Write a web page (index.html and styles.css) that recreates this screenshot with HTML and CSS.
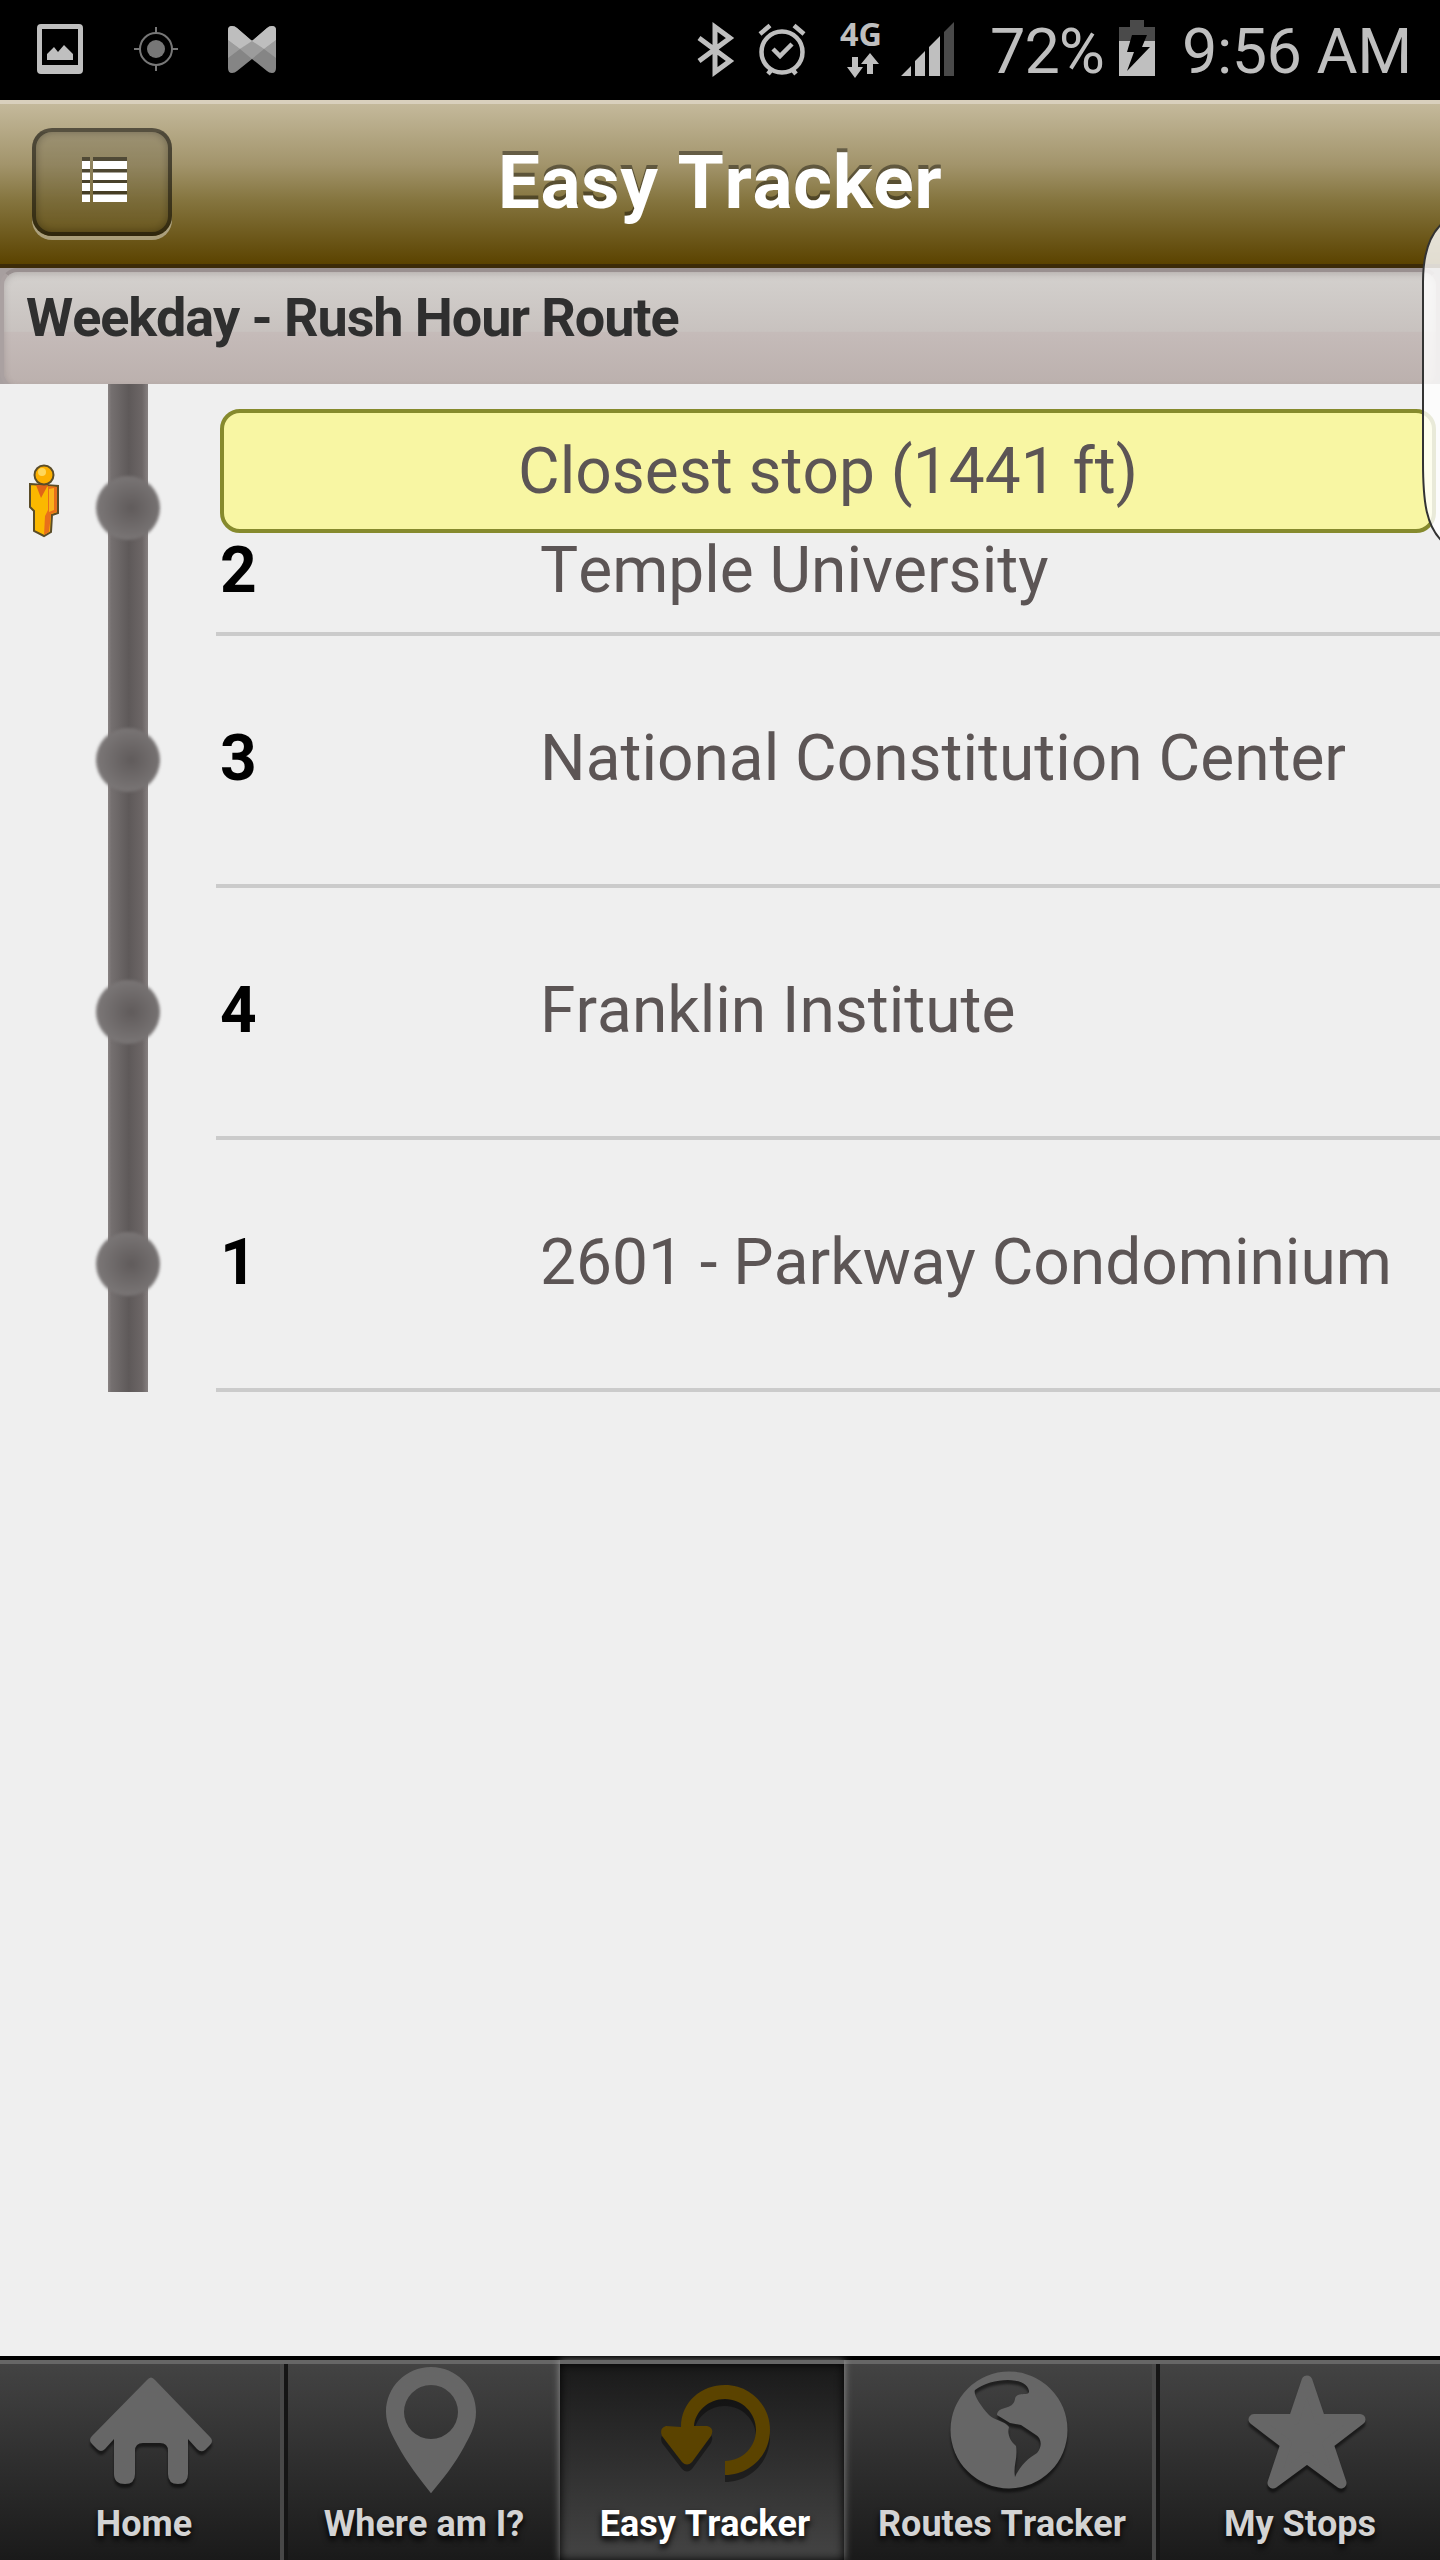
FILE: index.html
```
<!DOCTYPE html>
<html lang="en">
<head>
    <meta charset="UTF-8">
    <meta name="viewport" content="width=device-width, initial-scale=1.0">
    <title>Easy Tracker</title>
    <link rel="stylesheet" href="styles.css">
</head>
<body>
    <div class="screen">
        <div class="status-bar">
            <div class="status-left">
                <svg class="st-photo" width="46" height="50" viewBox="0 0 46 50">
                    <path fill="#bfbfbf" fill-rule="evenodd" d="M4 0H42Q46 0 46 4V46Q46 50 42 50H4Q0 50 0 46V4Q0 0 4 0ZM5 5V41H41V5Z"/>
                    <path fill="#bfbfbf" d="M10 36V30L17 23L21 28L27 21L36 30V36Z"/>
                </svg>
                <svg class="st-gps" width="46" height="46" viewBox="0 0 46 46">
                    <circle cx="23" cy="23" r="16" fill="none" stroke="#777" stroke-width="2"/>
                    <circle cx="23" cy="23" r="9" fill="#777"/>
                    <path d="M23 1V7M23 39V45M1 23H7M39 23H45" stroke="#777" stroke-width="2"/>
                </svg>
                <svg class="st-mail" width="48" height="47" viewBox="0 0 48 47">
                    <path fill="#858585" d="M0 4Q0 0 4 0Q7 0 9 2L24 15L39 2Q41 0 44 0Q48 0 48 4V42Q48 47 44 47Q41 47 39 45L24 33L9 45Q7 47 4 47Q0 47 0 42Z"/>
                    <path fill="#9c9c9c" d="M0 14L12 23L24 14L36 23L48 14V32L36 23L24 33L12 23L0 32Z"/>
                    <path fill="#bebebe" d="M0 4Q0 0 4 0Q7 0 9 2L24 15L12 23L0 14ZM48 4Q48 0 44 0Q41 0 39 2L24 15L36 23L48 14Z"/>
                </svg>
            </div>
            <div class="status-right">
                <svg class="st-icons" width="260" height="90" viewBox="0 -15 260 90">
                    <path fill="none" stroke="#bfbfbf" stroke-width="5" d="M2 18L33 41L18 52V7L33 18L2 41"/>
                    <circle cx="85" cy="32" r="20.500" fill="none" stroke="#bfbfbf" stroke-width="4.500"/>
                    <path fill="none" stroke="#bfbfbf" stroke-width="4.500" d="M76 29L83 36L95 24M63 14L73 5.500M107 14L97 5.500M75 49L71 54M95 49L99 54"/>
                    <text class="net" x="143" y="26" textLength="42" lengthAdjust="spacingAndGlyphs">4G</text>
                    <path fill="#bfbfbf" d="M155 37H161V47H166L158 58L150 47H155ZM170 54H176V44H182L173 33L164 44H170Z"/>
                    <path fill="#bfbfbf" d="M204 56L214 46V56ZM218 41L228 31V56H218ZM232 27L243 16V56H232Z"/>
                    <path fill="#4a4a4a" d="M247 12L257 2V56H247Z"/>
                </svg>
                <span class="battery-pct">72%</span>
                <svg class="st-battery" width="36" height="56" viewBox="0 0 36 56">
                    <path fill="#4a4a4a" d="M11 0H25V7H36V21H0V7H11Z"/>
                    <path fill="#bfbfbf" d="M0 21H36V56H0Z"/>
                    <path fill="#000" d="M13 15H28L23 27H31L8 51L15 32H8Z"/>
                </svg>
                <span class="clock">9:56 AM</span>
            </div>
        </div>

        <div class="title-bar">
            <button class="menu-btn" aria-label="Menu">
                <svg width="46" height="50" viewBox="0 0 46 50">
                    <path fill="#000" fill-opacity=".45" d="M0 0H8V45H0ZM11 0H45V45H11Z"/>
                    <path fill="#fff" d="M0 4H8V12H0ZM11 4H45V12H11ZM0 15.500H8V23H0ZM11 15.500H45V23H11ZM0 26H8V34H0ZM11 26H45V34H11ZM0 37.500H8V45H0ZM11 37.500H45V45H11Z"/>
                </svg>
            </button>
            <h1>Easy Tracker</h1>
        </div>

        <div class="route-bar">
            <div class="route-field">Weekday - Rush Hour Route</div>
        </div>

        <div class="stops">
            <div class="stop">
                <div class="marker">
                    <svg width="34" height="74" viewBox="0 0 34 74">
                        <path fill="#fbb800" stroke="#5a4c28" stroke-width="2" d="M3 20L31 22V49L25 51L24 68L17 72L7 67V47L3 43Z"/>
                        <path fill="#e8701a" d="M21 22L30 23V48L24 50L22 68L17 71L18 52L21 46Z"/>
                        <path fill="#fbb21c" d="M22 25L27 24V46L22 48Z"/>
                        <path fill="#e06418" d="M9 21H21L14 34Z"/>
                        <circle cx="17" cy="11" r="9.500" fill="#fdb000" stroke="#5a4c28" stroke-width="2"/>
                        <circle cx="15" cy="8" r="4" fill="#ffd75a"/>
                    </svg>
                </div>
                <div class="track"><div class="dot"></div></div>
                <div class="stop-body">
                    <div class="closest">Closest stop (1441 ft)</div>
                    <div class="stop-line"><span class="num">2</span><span class="name">Temple University</span></div>
                </div>
            </div>
            <div class="stop">
                <div class="marker"></div>
                <div class="track"><div class="dot"></div></div>
                <div class="stop-body">
                    <div class="stop-line"><span class="num">3</span><span class="name">National Constitution Center</span></div>
                </div>
            </div>
            <div class="stop">
                <div class="marker"></div>
                <div class="track"><div class="dot"></div></div>
                <div class="stop-body">
                    <div class="stop-line"><span class="num">4</span><span class="name">Franklin Institute</span></div>
                </div>
            </div>
            <div class="stop">
                <div class="marker"></div>
                <div class="track"><div class="dot"></div></div>
                <div class="stop-body">
                    <div class="stop-line"><span class="num">1</span><span class="name">2601 - Parkway Condominium</span></div>
                </div>
            </div>
        </div>

        <div class="tab-bar">
            <div class="tab tab-home">
                <svg class="tab-icon" width="128" height="128" viewBox="0 0 128 128">
                    <path d="M60 14Q64 9 68 14L123 71Q127 75 123 79L118 84Q114 87 110 83L101 73V108Q101 118 91 118Q81 118 81 108V85Q81 77 73 77H56Q48 77 48 85V108Q48 118 38 118Q27 118 27 108V73L18 83Q14 87 10 83L5 78Q1 74 5 70Z"/>
                </svg>
                <span>Home</span>
            </div>
            <div class="tab tab-where">
                <svg class="tab-icon flat" width="128" height="128" viewBox="0 0 128 128">
                    <path fill-rule="evenodd" d="M64 1C89 1 109 21 109 46C109 61 102 71 97 81C88 98 75 114 65 126Q64 128 63 126C53 113 40 97 31 80C26 70 19 60 19 46C19 21 39 1 64 1ZM64 19A27 27 0 1 0 64 73A27 27 0 1 0 64 19Z"/>
                </svg>
                <span>Where am I?</span>
            </div>
            <div class="tab tab-easy active">
                <svg class="tab-icon" width="128" height="128" viewBox="0 0 128 128">
                    <path d="M30 61C30 36 50 19 74 19C99 19 119 39 119 64C119 89 99 109 74 109V95C91 95 105 81 105 64C105 47 91 33 74 33C57 33 44 46 43 60H56Q64 62 60 70L41 96Q36 101 31 96L11 70Q8 62 15 60Z"/>
                </svg>
                <span>Easy Tracker</span>
            </div>
            <div class="tab tab-routes">
                <svg class="tab-icon" width="128" height="128" viewBox="0 0 128 128">
                    <path fill-rule="evenodd" d="M64 5.500A58.500 58.500 0 1 1 64 122.500A58.500 58.500 0 1 1 64 5.500ZM30 24C28 28 35 39 44 49C49 54 60 55 64 61C62 68 65 75 71 80C73 93 68 99 70 111C76 98 84 92 92 87C98 80 96 72 91 69L76 59L65 57L52 49C53 39 68 45 70 33C71 25 85 31 84 25C82 10 47 11 30 24Z"/>
                </svg>
                <span>Routes Tracker</span>
            </div>
            <div class="tab tab-stops">
                <svg class="tab-icon" width="128" height="128" viewBox="0 0 128 128">
                    <path stroke-width="11" stroke-linejoin="round" d="M64 15L77 53.500H117L85 78L98 117L64 92L30 117L43 78L11 53.500H51Z"/>
                </svg>
                <span>My Stops</span>
            </div>
        </div>

        <!-- edge panel handle, partly off screen -->
        <svg class="edge-handle" width="19" height="322" viewBox="0 0 19 322">
            <path fill="#fff" fill-opacity=".82" stroke="#333" stroke-width="2" d="M24 -1C7 12 2 34 2 60V240C2 280 5 306 24 322Z"/>
        </svg>
    </div>
</body>
</html>
```
FILE: styles.css
```
* {
    margin: 0;
    padding: 0;
    box-sizing: border-box;
}

body {
    font-family: Roboto, "Noto Sans", sans-serif;
    font-kerning: none;
    background: #efefef;
}

.screen {
    position: relative;
    display: flex;
    flex-direction: column;
    width: 1440px;
    height: 2560px;
    overflow: hidden;
}

svg {
    display: block;
    flex: none;
}

/* status bar */
.status-bar {
    display: flex;
    justify-content: space-between;
    height: 100px;
    padding: 0 31px 0 37px;
    background: #000;
    color: #bfbfbf;
}

.status-left,
.status-right {
    display: flex;
    align-items: center;
}

.status-left {
    padding-bottom: 2px;
}

.st-gps {
    margin-left: 50px;
}

.st-mail {
    margin-left: 49px;
}

.net {
    font-family: "Noto Sans", sans-serif;
    font-size: 33px;
    font-weight: 700;
    fill: #bfbfbf;
}

.battery-pct,
.clock {
    font-size: 63px;
    line-height: 100px;
    white-space: nowrap;
    padding-top: 4px;
}

.battery-pct {
    width: 115px;
    margin-left: 33px;
    letter-spacing: -1px;
}

.st-battery {
    margin: 0 27px 4px 14px;
}

.clock {
    width: 227px;
    letter-spacing: -0.5px;
}

/* title bar */
.title-bar {
    display: grid;
    grid-template-columns: 200px 1fr 200px;
    align-items: center;
    height: 168px;
    padding: 0 32px;
    border-top: 4px solid #d9d0bd;
    border-bottom: 4px solid #3c2b08;
    background: linear-gradient(#c4b99b, #a2946b 38%, #85753f 60%, #5b4300);
}

.title-bar h1 {
    font-size: 75px;
    font-weight: 700;
    letter-spacing: 0.5px;
    color: #fff;
    text-align: center;
    text-shadow: 0 -4px 0 rgba(0, 0, 0, 0.4);
    padding-bottom: 5px;
}

.menu-btn {
    display: flex;
    align-items: center;
    justify-content: center;
    width: 140px;
    height: 108px;
    margin-bottom: 4px;
    padding-left: 5px;
    border: 4px solid rgba(0, 0, 0, 0.5);
    border-radius: 20px;
    background: linear-gradient(rgba(0, 0, 0, 0.13), rgba(0, 0, 0, 0.05));
    box-shadow: 0 4px 0 rgba(255, 255, 255, 0.42), inset 0 0 8px rgba(0, 0, 0, 0.3);
}

/* selected route */
.route-bar {
    height: 116px;
    overflow: hidden;
    background: #a79f9f;
}

.route-field {
    height: 122px;
    padding: 0 22px;
    border: 4px solid #aaa1a1;
    border-top-color: #999090;
    border-radius: 18px;
    background: linear-gradient(#d4d1ce, #c8c2bf 52%, #c5bbb9 53%, #bbb0ad);
    box-shadow: inset 0 2px 6px rgba(80, 70, 70, 0.25);
    color: #2f2f2f;
    font-size: 54px;
    font-weight: 700;
    letter-spacing: -1.1px;
    line-height: 92px;
}

/* stop list */
.stops {
    flex: 1;
}

.stop {
    display: grid;
    grid-template-columns: 88px 80px 1fr;
    height: 252px;
}

.marker {
    padding: 80px 0 0 27px;
}

.track {
    display: flex;
    align-items: center;
    justify-content: center;
    padding-bottom: 4px;
    background: linear-gradient(90deg, #8a8484, #757070 8%, #5e5959 52%, #6c6666 85%, #868080) 50% 0 / 40px 100% no-repeat;
}

.dot {
    width: 64px;
    height: 64px;
    border-radius: 50%;
    background: radial-gradient(circle at 55% 50%, #605b5b, #7c7878 75%);
    filter: blur(1.5px);
}

.stop-body {
    display: flex;
    flex-direction: column;
    justify-content: center;
    margin-left: 48px;
    padding-left: 4px;
    border-bottom: 4px solid #cbcbcb;
    font-size: 64px;
    line-height: 80px;
}

.closest {
    height: 124px;
    margin: 6px 4px -2px 0;
    border: 4px solid #868a2d;
    border-radius: 20px;
    background: #f8f6a3;
    color: #5c5555;
    text-align: center;
    line-height: 118px;
}

.stop-line {
    display: flex;
    margin-bottom: 3px;
}

.num {
    width: 320px;
    color: #000;
    font-weight: 700;
}

.name {
    color: #5c5555;
    white-space: nowrap;
}

/* tabs */
.tab-bar {
    display: flex;
    height: 204px;
    border-top: 4px solid #000;
    background: linear-gradient(#444, #1a1a1a);
}

.tab {
    display: flex;
    flex-direction: column;
    align-items: center;
    padding-top: 6px;
    border-top: 4px solid #666;
    color: #d3d3d3;
    font-size: 36px;
    font-weight: 700;
    line-height: 40px;
    white-space: nowrap;
    text-shadow: 0 4px 6px #000;
}

.tab-home {
    width: 288px;
}

.tab-where {
    width: 272px;
}

.tab-easy {
    width: 284px;
    padding-left: 6px;
}

.tab-routes {
    width: 316px;
}

.tab-stops {
    width: 280px;
}

.tab-home,
.tab-routes {
    box-shadow: inset -4px 0 #151515, inset -8px 0 #484848;
}

.tab.active {
    background: linear-gradient(#1a1a1a, #444);
    box-shadow: 0 0 8px rgba(255, 255, 255, 0.45), inset 0 0 10px #000;
    color: #fff;
    z-index: 1;
}

.tab-icon {
    margin: -4px 0 10px 13px;
    fill: #666;
    stroke: #666;
    stroke-width: 0;
    filter: drop-shadow(0 4px 1px rgba(0, 0, 0, 0.5));
}

.tab-icon.flat {
    filter: none;
}

.active .tab-icon {
    margin-left: 19px;
    fill: #5b4300;
    filter: drop-shadow(0 7px 0 rgba(0, 0, 0, 0.4));
}

.edge-handle {
    position: absolute;
    top: 222px;
    right: 0;
}
```
